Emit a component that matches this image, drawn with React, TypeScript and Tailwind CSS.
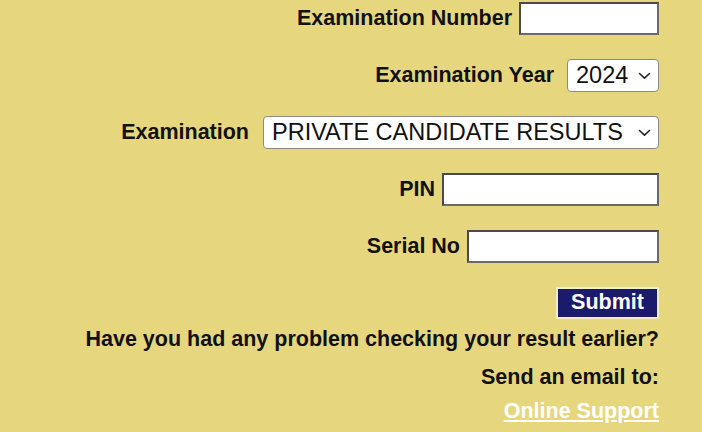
import { useState } from "react";

const Chevron = () => (
  <svg width="13" height="8" viewBox="0 0 13 8" className="pointer-events-none absolute right-[8px] top-1/2 -translate-y-1/2">
    <path d="M1.5 1.5 L6.5 6.2 L11.5 1.5" fill="none" stroke="#222" strokeWidth="1.6" strokeLinecap="round" strokeLinejoin="round" />
  </svg>
);

const labelCls = "text-[21.5px] font-bold text-[#111] leading-none";
const inputCls = "h-[33px] bg-white border-2 border-[#4a4a4a] border-b-[#6a6a6a] border-r-[#6a6a6a] outline-none px-1 text-[20px]";

const App = () => {
  const [year, setYear] = useState("2024");
  const [exam, setExam] = useState("PRIVATE CANDIDATE RESULTS");

  return (
    <div className="w-[702px] h-[432px] overflow-hidden bg-[#e6d77e] font-['Liberation_Sans',Arial,sans-serif]">
      <div className="w-[659px] pt-[2px] flex flex-col items-end">
        <div className="flex flex-col items-end gap-[24px]">
          <div className="flex items-center h-[33px]">
            <label className={labelCls}>Examination Number</label>
            <input type="text" className={`${inputCls} w-[140px] ml-[7px]`} />
          </div>

          <div className="flex items-center h-[33px]">
            <label className={labelCls}>Examination Year</label>
            <div className="relative ml-[13px]">
              <select
                value={year}
                onChange={(e) => setYear(e.target.value)}
                className="appearance-none w-[92px] h-[33px] bg-white border border-[#8a8a8a] rounded-[4px] pl-[8px] text-[23.5px] text-[#111] leading-none outline-none"
              >
                <option>2024</option>
                <option>2023</option>
                <option>2022</option>
              </select>
              <Chevron />
            </div>
          </div>

          <div className="flex items-center h-[33px]">
            <label className={labelCls}>Examination</label>
            <div className="relative ml-[14px]">
              <select
                value={exam}
                onChange={(e) => setExam(e.target.value)}
                className="appearance-none w-[396px] h-[33px] bg-white border border-[#8a8a8a] rounded-[4px] pl-[8px] text-[23.5px] text-[#111] leading-none outline-none"
              >
                <option>PRIVATE CANDIDATE RESULTS</option>
                <option>SCHOOL CANDIDATE RESULTS</option>
              </select>
              <Chevron />
            </div>
          </div>

          <div className="flex items-center h-[33px]">
            <label className={labelCls}>PIN</label>
            <input type="password" className={`${inputCls} w-[217px] ml-[7px]`} />
          </div>

          <div className="flex items-center h-[33px]">
            <label className={labelCls}>Serial No</label>
            <input type="text" className={`${inputCls} w-[192px] ml-[7px]`} />
          </div>

          <button
            type="submit"
            className="w-[103px] h-[32px] bg-[#1c1a6d] border-2 border-[#f3edc8] text-white text-[21.5px] font-bold leading-none"
          >
            Submit
          </button>
        </div>

        <p className="mt-[10px] text-[21.5px] font-bold text-[#111] leading-none">
          Have you had any problem checking your result earlier?
        </p>
        <p className="mt-[16px] text-[21.5px] font-bold text-[#111] leading-none">Send an email to:</p>
        <a href="#" className="mt-[13px] text-[21.5px] font-bold text-white underline leading-none">
          Online Support
        </a>
      </div>
    </div>
  );
};

export default App;
